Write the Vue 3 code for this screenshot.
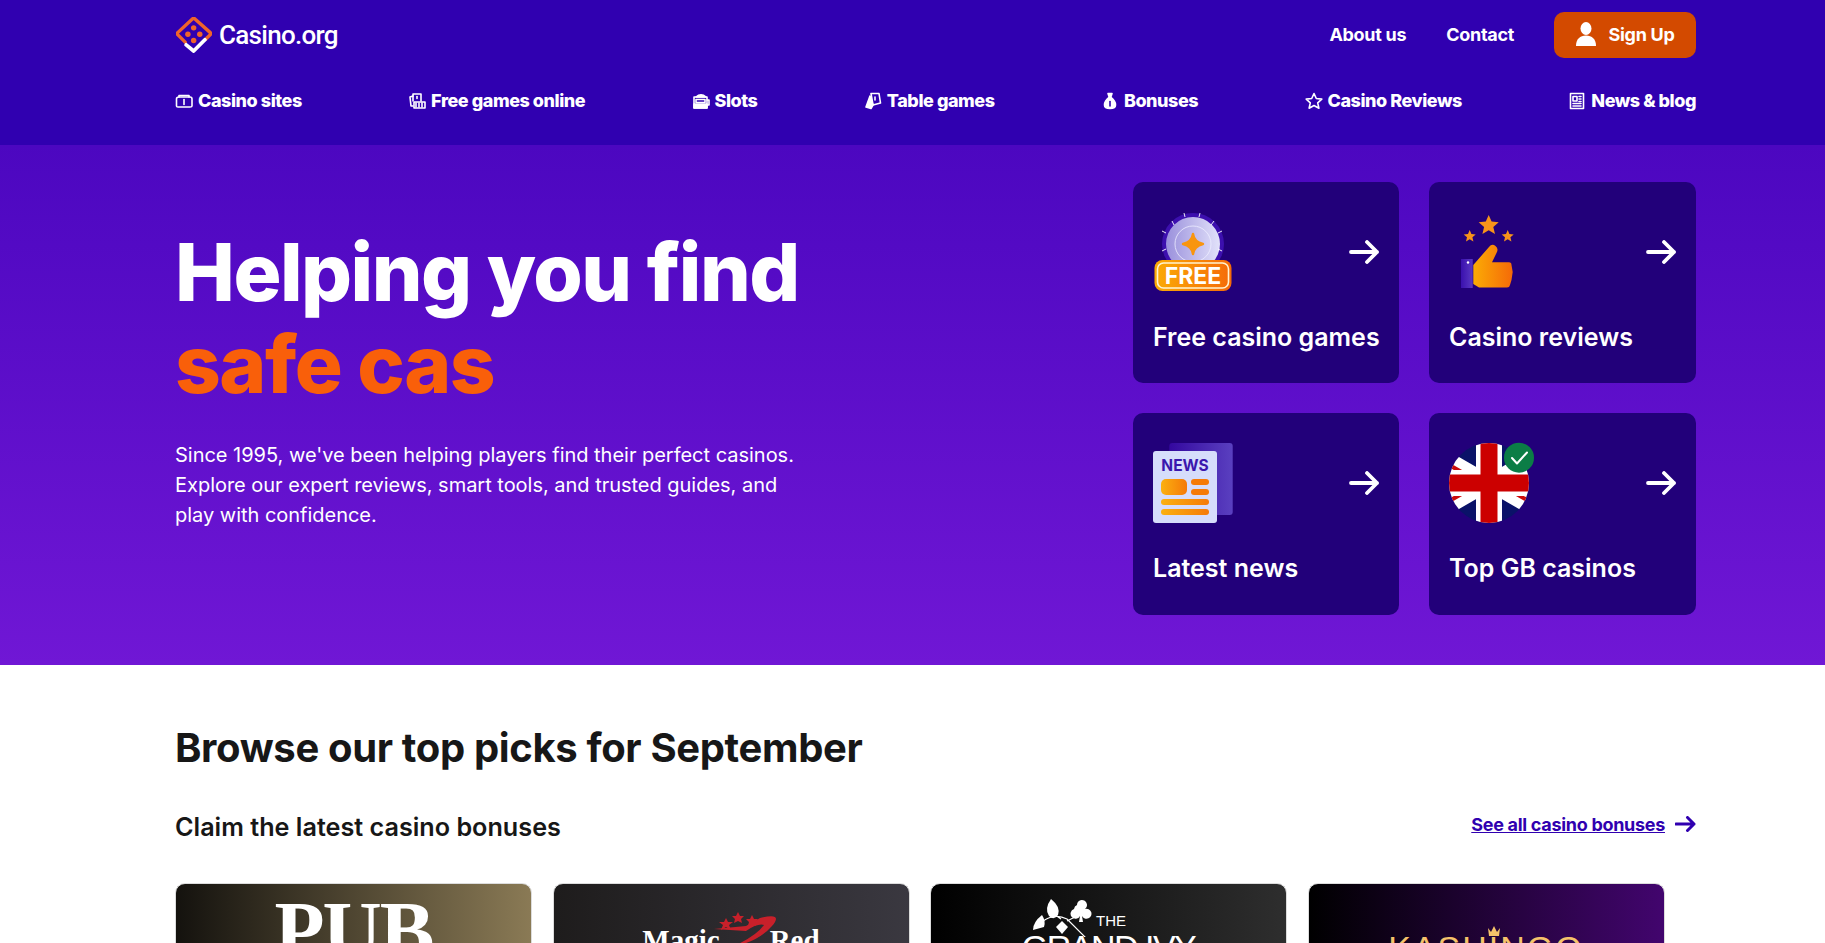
<template>
  <div class="page">
    <header class="site-header">
      <div class="wrap">
        <div class="top-row">
          <a class="logo">
            <svg class="logo-mark" viewBox="0 0 106 106" fill="none">
              <path d="M27 74 L5 52 Q2 49 5 46 L49 5 Q52 2 55 5 L101 46 Q104 49 101 52 L88 65" stroke="#f0642a" stroke-width="10" stroke-linecap="round" stroke-linejoin="round" />
              <path d="M30 82 L52 100 L85 67" stroke="#fff" stroke-width="11" stroke-linecap="round" stroke-linejoin="round" />
              <circle cx="52" cy="32" r="8" fill="#f0642a" />
              <circle cx="35" cy="51" r="8" fill="#f0642a" />
              <circle cx="70" cy="51" r="8" fill="#f0642a" />
              <circle cx="52" cy="69" r="8" fill="#f0642a" />
            </svg>
            <span>Casino.org</span>
          </a>
          <nav class="top-links">
            <a>About us</a>
            <a>Contact</a>
            <a class="signup">
              <svg width="20" height="24" viewBox="0 0 20 24" fill="#fff">
                <ellipse cx="10" cy="6.500" rx="5.500" ry="6.500" />
                <path d="M0 24 C0 17 4 13.500 10 13.500 C16 13.500 20 17 20 24 Z" />
              </svg>
              Sign Up
            </a>
          </nav>
        </div>
        <nav class="main-nav">
          <a v-for="item in navItems" :key="item.label">
            <svg width="18" height="18" viewBox="0 0 18 18" fill="none" stroke="#fff" stroke-width="1.6" stroke-linejoin="round" stroke-linecap="round">
              <path v-for="d in item.solid" :key="d" :d="d" fill="#fff" />
              <path v-for="d in item.paths" :key="d" :d="d" />
              <path v-for="d in item.cut" :key="d" :d="d" stroke="#3000b0" />
            </svg>
            {{ item.label }}
          </a>
        </nav>
      </div>
    </header>

    <section class="hero">
      <div class="wrap hero-inner">
        <div class="hero-copy">
          <h1>Helping you find<br /><span>safe cas</span></h1>
          <p>Since 1995, we've been helping players find their perfect casinos. Explore our expert reviews, smart tools, and trusted guides, and play with confidence.</p>
        </div>
        <div class="hero-grid">
          <a class="tile">
            <div class="tile-top">
              <svg class="tile-icon" viewBox="0 0 80 80">
                <defs>
                  <linearGradient id="coin" x1="0" x2="1" y1="0" y2="0"><stop offset="0" stop-color="#9a90dc" /><stop offset="1" stop-color="#e2e2fa" /></linearGradient>
                  <linearGradient id="gold" x1="0" x2="1" y1="0" y2="0"><stop offset="0" stop-color="#fbab05" /><stop offset="1" stop-color="#f56a08" /></linearGradient>
                </defs>
                <circle cx="40" cy="32" r="31" fill="#3c0fae" />
                <circle cx="40" cy="32" r="27" fill="url(#coin)" />
                <circle cx="40" cy="32" r="18" fill="none" stroke="#eeeeff" stroke-width="0.8" />
                <path d="M40 22 Q41 30 50 32 Q41 34 40 42 Q39 34 30 32 Q39 30 40 22 Z" fill="#f8950f" stroke="#f8950f" stroke-width="2.400" stroke-linejoin="round" />
                <path d="M19 9 L21 13 M31 1 L32 5 M47 1 L46 5 M61 9 L58 13 M69 19 L65 21 M9 19 L13 21 M9 39 L13 37 M69 39 L65 37" stroke="#fff" stroke-width="0.9" />
                <rect x="1.5" y="48" width="77" height="31" rx="8" fill="url(#gold)" />
                <rect x="4.5" y="51" width="71" height="25" rx="6" fill="none" stroke="#fff3d0" stroke-width="1.6" />
                <text x="40" y="71.5" text-anchor="middle" class="free-text">FREE</text>
              </svg>
              <svg class="tile-arrow" viewBox="0 0 30 24"><path d="M2 12 H28 M18 2 L28 12 L18 22" /></svg>
            </div>
            <h3>Free casino games</h3>
          </a>
          <a class="tile">
            <div class="tile-top">
              <svg class="tile-icon" viewBox="0 0 80 80">
                <defs>
                  <linearGradient id="thumb" x1="0" x2="1" y1="0" y2="0"><stop offset="0" stop-color="#fbab05" /><stop offset="1" stop-color="#f56a08" /></linearGradient>
                  <linearGradient id="sleeve" x1="0" x2="1" y1="0" y2="0"><stop offset="0" stop-color="#3a10ae" /><stop offset="1" stop-color="#5a38c2" /></linearGradient>
                </defs>
                <path d="M39.7 3 L42.6 9.6 L49.7 10.3 L44.3 15 L46 22 L39.7 18.3 L33.4 22 L35.1 15 L29.7 10.3 L36.8 9.6 Z" fill="#f7931a" />
                <path d="M20.7 18 L22.4 22 L26.7 22.4 L23.4 25.2 L24.4 29.4 L20.7 27.2 L17 29.4 L18 25.2 L14.7 22.4 L19 22 Z" fill="#f7931a" />
                <path d="M58.7 18 L60.4 22 L64.7 22.4 L61.4 25.2 L62.4 29.4 L58.7 27.2 L55 29.4 L56 25.2 L52.7 22.4 L57 22 Z" fill="#f7931a" />
                <rect x="12" y="47" width="11.7" height="29" fill="url(#sleeve)" />
                <circle cx="19" cy="50.5" r="1.2" fill="#fff" />
                <path d="M24.3 53 L40 35 Q43 31 46.5 34 Q50 37 47.5 41 L43 50.3 L60 50.3 Q62.5 50.3 62.5 53 L63.7 60 L62.5 68 L61 73 Q60.5 75.5 58 75.5 L30 75.5 L24.3 72 Z" fill="url(#thumb)" />
              </svg>
              <svg class="tile-arrow" viewBox="0 0 30 24"><path d="M2 12 H28 M18 2 L28 12 L18 22" /></svg>
            </div>
            <h3>Casino reviews</h3>
          </a>
          <a class="tile">
            <div class="tile-top">
              <svg class="tile-icon" viewBox="0 0 80 80">
                <defs>
                  <linearGradient id="sheet" x1="0" x2="1" y1="0" y2="0"><stop offset="0" stop-color="#34089f" /><stop offset="1" stop-color="#5a40c0" /></linearGradient>
                  <linearGradient id="bar" x1="0" x2="1" y1="0" y2="0"><stop offset="0" stop-color="#fbb010" /><stop offset="1" stop-color="#f57a08" /></linearGradient>
                </defs>
                <rect x="16.3" y="0" width="63.4" height="72" rx="3" fill="url(#sheet)" />
                <rect x="0" y="8" width="64" height="72" rx="3" fill="#d6ddfb" />
                <text x="32" y="27.5" text-anchor="middle" class="news-text">NEWS</text>
                <rect x="8" y="36" width="26" height="16" rx="5" fill="url(#bar)" />
                <rect x="38" y="36" width="18" height="6" rx="3" fill="#f57a08" />
                <rect x="38" y="46" width="18" height="6" rx="3" fill="#f57a08" />
                <rect x="8" y="56" width="48" height="6" rx="3" fill="url(#bar)" />
                <rect x="8" y="66" width="48" height="6" rx="3" fill="url(#bar)" />
              </svg>
              <svg class="tile-arrow" viewBox="0 0 30 24"><path d="M2 12 H28 M18 2 L28 12 L18 22" /></svg>
            </div>
            <h3>Latest news</h3>
          </a>
          <a class="tile">
            <div class="tile-top">
              <svg class="tile-icon" viewBox="0 0 80 80">
                <defs>
                  <clipPath id="flagclip"><circle cx="40" cy="40" r="40" /></clipPath>
                </defs>
                <g clip-path="url(#flagclip)">
                  <rect width="80" height="80" fill="#0a1268" />
                  <path d="M-5 14 L85 66 M-5 66 L85 14" stroke="#fff" stroke-width="15" />
                  <path d="M-5 19 L30 39 M50 41 L85 61 M-5 61 L30 41 M50 39 L85 19" stroke="#cc0a0a" stroke-width="4" />
                  <rect x="27" width="26" height="80" fill="#fff" />
                  <rect y="27" width="80" height="26" fill="#fff" />
                  <rect x="31.5" width="17" height="80" fill="#cc0000" />
                  <rect y="31.5" width="80" height="17" fill="#cc0000" />
                </g>
                <circle cx="70" cy="14.7" r="15" fill="#0b7d46" />
                <path d="M63 15 L68 20.5 L78 9.5" fill="none" stroke="#fff" stroke-width="2" stroke-linecap="round" stroke-linejoin="round" />
              </svg>
              <svg class="tile-arrow" viewBox="0 0 30 24"><path d="M2 12 H28 M18 2 L28 12 L18 22" /></svg>
            </div>
            <h3>Top GB casinos</h3>
          </a>
        </div>
      </div>
    </section>

    <section class="picks">
      <div class="wrap">
        <h2>Browse our top picks for September</h2>
        <div class="picks-head">
          <h3>Claim the latest casino bonuses</h3>
          <a class="see-all">
            <span>See all casino bonuses</span>
            <svg width="21" height="16" viewBox="0 0 21 16"><path d="M1 8 H19 M12.5 1.5 L19 8 L12.5 14.5" /></svg>
          </a>
        </div>
        <div class="offers">
          <div class="offer offer-pub"><span class="pub">PUB</span></div>
          <div class="offer offer-magic">
            <div class="magic-row">
              <span>Magic</span>
              <svg class="magic-mark" width="70" height="32" viewBox="0 0 70 32">
                <path d="M4 17 L36 14 L50 6 Q74 0 62 14 Q48 30 24 34 Q46 24 54 13 Q48 11 36 19 Z" fill="#c8202a" />
                <path d="M16 6 L18 10 L23 10 L19 13 L21 18 L16 15 L11 18 L13 13 L9 10 L14 10 Z M28 0 L30 4 L34 4 L31 7 L32 11 L28 9 L24 11 L25 7 L22 4 L26 4 Z M42 3 L44 7 L48 7 L45 10 L46 14 L42 12 L38 14 L39 10 L36 7 L40 7 Z" fill="#c8202a" />
              </svg>
              <span>Red</span>
            </div>
          </div>
          <div class="offer offer-ivy">
            <div class="ivy-top">
              <svg width="62" height="40" viewBox="0 0 62 40" fill="#fff">
                <path d="M20 2 Q30 10 27 18 Q23 24 18 19 Q13 12 20 2 Z" />
                <path d="M11 18 Q15 24 13 30 L2 33 Q2 25 11 18 Z" />
                <path d="M46 8 a5 5 0 1 1 8 4 a5 5 0 1 1 -3 7 l1 6 h-4 l1 -6 a5 5 0 1 1 -6 -7 a5 5 0 0 1 3 -4 Z" />
                <path d="M31 24 L37 30 L31 37 L25 30 Z" />
                <path d="M12 24 Q24 16 36 22 L58 44 M24 18 L30 22 M36 24 L48 18" fill="none" stroke="#fff" stroke-width="1.2" />
              </svg>
              <span class="ivy-the">THE</span>
            </div>
            <span class="ivy">GRAND IVY</span>
          </div>
          <div class="offer offer-kash">
            <svg class="crown" width="14" height="11" viewBox="0 0 14 11" fill="#f5c36a"><path d="M1 2 L4 6 L7 0 L10 6 L13 2 L12 10 H2 Z" /></svg>
            <span class="kash">KASHINGO</span>
          </div>
        </div>
      </div>
    </section>
  </div>
</template>

<script setup>
const navItems = [
  { label: 'Casino sites', paths: ['M4 5 H15 Q17 5 17 7 V14 Q17 15 15 15 H3 Q1.500 15 1.500 14 V7 Q1.500 5 4 5 Z', 'M4 5 V3.500 H14 V5', 'M9 7.500 V12.500'] },
  { label: 'Free games online', paths: ['M5 9 V2 H13 V9', 'M5 4 L2 5 L3 14 L5 14', 'M9 4.500 V6.500', 'M6 10 H17 V16 H6 Z', 'M8 11 V15 M11 11 V15 M14 11 V15'] },
  { label: 'Slots', solid: ['M4 5 Q9 0.500 14 5 Z', 'M2 12 H15 V16 H2 Z'], paths: ['M2 5 H15 V16 H2 Z', 'M4 7.500 H13 V10.500 H4 Z', 'M15 8 H17 V13 H15'] },
  { label: 'Table games', solid: ['M6 4 L2 15 L7 16.500 L9 13 Z'], paths: ['M7 1.500 H15 L16.500 11 L9 13 Z', 'M11 5 V8'] },
  { label: 'Bonuses', solid: ['M7 1.500 H11 L10 4.500 H8 Z', 'M8 5.500 Q3.500 9 3.500 13 Q3.500 16.500 9 16.500 Q14.500 16.500 14.500 13 Q14.500 9 10 5.500 Z'], cut: ['M9 9.500 V14'] },
  { label: 'Casino Reviews', paths: ['M9 1.500 L11.300 6.500 L16.800 7.100 L12.700 10.800 L13.900 16.200 L9 13.500 L4.100 16.200 L5.300 10.800 L1.200 7.100 L6.700 6.500 Z'] },
  { label: 'News & blog', paths: ['M2.500 1.500 H15.500 V16.500 H2.500 Z', 'M5 4.500 H9 V9 H5 Z', 'M11 4.500 H13 M11 7 H13 M11 9.500 H13', 'M5 11.500 H13 M5 14 H13'] }
]
</script>

<style>
html, body { margin: 0; overflow: hidden; background: #fff; }
</style>

<style scoped>
.page { height: 943px; overflow: hidden; font-family: Inter, "Liberation Sans", sans-serif; color: #171717; }
.wrap { width: 1521px; margin-left: 175px; }
a { color: inherit; text-decoration: none; }

.site-header { height: 145px; background: #3000b0; color: #fff; box-sizing: border-box; padding-top: 12px; }
.top-row { display: flex; justify-content: space-between; align-items: center; height: 46px; }
.logo { display: flex; align-items: center; gap: 7px; margin-left: 1px; font-family: Roboto, sans-serif; font-size: 26px; font-weight: 500; letter-spacing: -0.7px; }
.logo-mark { width: 36px; height: 36px; }
.top-links { display: flex; align-items: center; gap: 40px; font-size: 18px; font-weight: 700; letter-spacing: -0.3px; }
.top-links a { padding-bottom: 2px; box-sizing: border-box; }
.signup { display: flex; align-items: center; justify-content: center; gap: 13px; width: 142px; height: 46px; border-radius: 10px; background: #d34a00; }
.main-nav { display: flex; justify-content: space-between; margin-top: 31px; font-size: 18px; font-weight: 800; letter-spacing: -0.45px; line-height: 24px; }
.main-nav a { display: flex; align-items: center; gap: 5px; }

.hero { height: 520px; background: linear-gradient(180deg, #4c07c0 0%, #7017d5 100%); color: #fff; box-sizing: border-box; padding-top: 37px; }
.hero-inner { display: flex; justify-content: space-between; }
.hero-copy { width: 640px; padding-top: 44px; }
h1 { margin: 0; font-size: 80px; line-height: 92px; font-weight: 800; letter-spacing: -1.5px; }
h1 span { color: #f95f0a; }
.hero-copy p { margin: 30px 0 0; font-size: 20px; line-height: 30px; letter-spacing: -0.02px; }
.hero-grid { width: 563px; display: grid; grid-template-columns: 266px 267px; grid-template-rows: 201px 201.500px; gap: 30px; }
.tile { display: block; box-sizing: border-box; padding: 30px 20px; border-radius: 10px; background: #22007a; }
.tile-top { display: flex; justify-content: space-between; align-items: center; }
.tile-icon { width: 80px; height: 80px; overflow: visible; display: block; }
.tile-arrow { width: 30px; height: 24px; fill: none; stroke: #fff; stroke-width: 3.800; stroke-linecap: round; stroke-linejoin: round; }
.tile h3 { margin: 30px 0 0; font-size: 25px; line-height: 30px; font-weight: 600; color: #fff; white-space: nowrap; }
.free-text { font-family: Inter, sans-serif; font-size: 23px; font-weight: 700; fill: #fff; }
.news-text { font-family: Inter, sans-serif; font-size: 15.500px; font-weight: 700; fill: #3a17ad; }

.picks { padding-top: 59px; }
h2 { margin: 0; font-size: 40px; line-height: 48px; font-weight: 700; letter-spacing: -0.35px; }
.picks-head { display: flex; justify-content: space-between; align-items: center; margin-top: 39px; }
.picks-head h3 { margin: 0; font-size: 25.200px; line-height: 32px; font-weight: 600; }
.see-all { display: flex; align-items: center; gap: 10px; margin-top: -6px; color: #3000b0; font-size: 18px; font-weight: 700; letter-spacing: -0.3px; }
.see-all span { text-decoration: underline; }
.see-all path { fill: none; stroke: #3000b0; stroke-width: 3; stroke-linecap: round; stroke-linejoin: round; }

.offers { display: flex; gap: 20.5px; margin-top: 39.500px; }
.offer { width: 357px; height: 240px; flex: none; box-sizing: border-box; border: 1px solid #dcdcdc; border-radius: 10px; display: flex; flex-direction: column; align-items: center; color: #fff; }
.offer-pub { background: linear-gradient(90deg, #14120e, #8a7a55); padding-top: 4px; }
.offer-magic { background: linear-gradient(90deg, #1e1c1c, #3a3840); padding-top: 40px; }
.offer-ivy { background: linear-gradient(90deg, #000, #2e2e2e); padding-top: 13px; }
.offer-kash { background: linear-gradient(90deg, #000, #42056e); padding-top: 42px; }
.pub { font-family: "Liberation Serif", serif; font-weight: 700; font-size: 82px; line-height: 86px; letter-spacing: -2px; }
.magic-row { display: flex; align-items: flex-end; font-family: "Liberation Serif", serif; font-weight: 700; font-size: 29px; line-height: 32px; }
.magic-mark { overflow: visible; margin: -16px -10px 0; position: relative; top: -12px; }
.ivy-top { display: flex; align-items: flex-end; gap: 3px; margin-right: 60px; height: 40px; margin-bottom: -8px; }
.ivy-the { font-size: 15px; line-height: 15px; font-family: "Liberation Sans", sans-serif; padding-bottom: 9px; }
.ivy { font-family: "Liberation Sans", sans-serif; font-size: 34px; line-height: 36px; letter-spacing: -1.5px; }
.crown { margin-left: 16px; }
.kash { font-family: "Liberation Sans", sans-serif; font-size: 34px; line-height: 36px; margin-top: -7px; color: #f5c36a; letter-spacing: 2px; }
</style>
